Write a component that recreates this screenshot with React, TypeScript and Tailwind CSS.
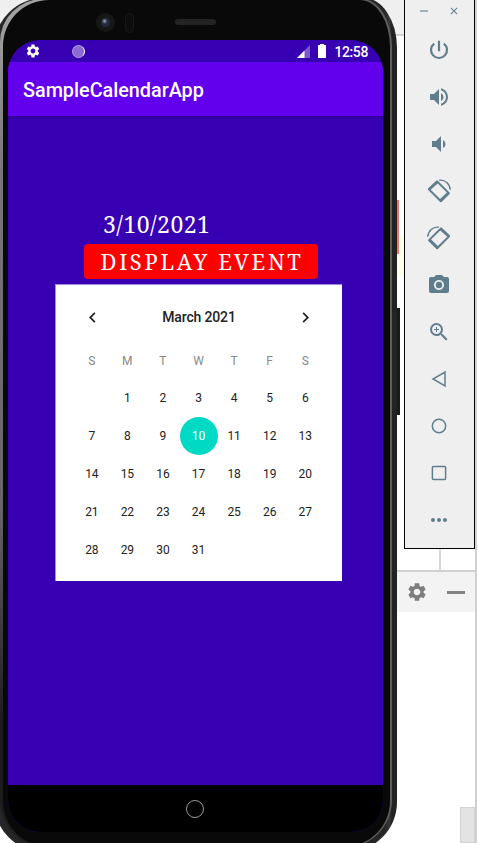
import React from "react";
import { MdSettings, MdVolumeUp, MdVolumeDown, MdCameraAlt, MdZoomIn, MdMoreHoriz, MdChevronLeft, MdChevronRight, MdClose } from "react-icons/md";

const weekdays = ["S", "M", "T", "W", "T", "F", "S"];
const cells: (number | null)[] = [null, ...Array.from({ length: 31 }, (_, i) => i + 1)];

function PowerIcon() {
  return (
    <svg viewBox="0 0 24 24" className="h-6 w-6" fill="none" stroke="currentColor" strokeWidth="2.2">
      <path d="M12 2.8v10.4M7.2 5.6a8 8 0 1 0 9.6 0" />
    </svg>
  );
}

function RotateIcon({ flipped = false }: { flipped?: boolean }) {
  return (
    <svg viewBox="0 0 24 24" className={flipped ? "h-6 w-6 -scale-x-100 overflow-visible" : "h-6 w-6 overflow-visible"} fill="none">
      <path
        d="M1.2 9.2 9.2 1.7Q10 1 10.8 1.8L22.6 13.5Q23.3 14.2 22.6 15L14.6 22.9Q13.8 23.6 13.1 22.9L1.2 11Q.4 10 1.2 9.2ZM3.7 10.7 13.1 20.1 19.9 13.5 10.7 4.4Z"
        fill="currentColor"
        fillRule="evenodd"
      />
      <path d="M12.3 1.2C18 .4 22.8 4.8 23.3 10.8" stroke="currentColor" strokeWidth="1.4" />
    </svg>
  );
}

function EmulatorToolbar() {
  return (
    <aside className="absolute -top-px left-[404px] flex h-[550px] w-[71px] flex-col border border-black bg-[#efefef] text-[#607d8b]">
      <div className="flex h-[22px] items-center justify-between pl-[15px] pr-[14px]">
        <span className="h-[2px] w-2 bg-[#a3b1b8]" />
        <MdClose className="h-3 w-3" />
      </div>
      <div className="flex flex-col items-center pt-1 pr-[2px]">
        {[
          <PowerIcon />,
          <MdVolumeUp className="h-6 w-6" />,
          <MdVolumeDown className="h-6 w-6" />,
          <RotateIcon />,
          <RotateIcon flipped />,
          <MdCameraAlt className="h-6 w-6" />,
          <MdZoomIn className="h-6 w-6" />,
          <svg viewBox="0 0 24 24" className="h-6 w-6" fill="none" stroke="currentColor" strokeWidth="1.5"><path d="M18 5v14L6 12Z" /></svg>,
          <svg viewBox="0 0 24 24" className="h-6 w-6" fill="none" stroke="currentColor" strokeWidth="1.5"><circle cx="12" cy="12" r="6.7" /></svg>,
          <svg viewBox="0 0 24 24" className="h-6 w-6" fill="none" stroke="currentColor" strokeWidth="1.5"><rect x="5.4" y="5.4" width="13.2" height="13.2" rx="1" /></svg>,
          <MdMoreHoriz className="h-6 w-6" />,
        ].map((icon, i) => (
          <div key={i} className="flex h-[47px] w-full items-center justify-center">{icon}</div>
        ))}
      </div>
    </aside>
  );
}

function Calendar() {
  return (
    <section className="ml-[47px] h-[297px] w-[287px] border-t border-l border-[#a68add] bg-white pt-[13px] pr-[19px] pl-[18px] text-[#222]">
      <div className="flex h-[38px] items-center justify-between pr-[7px] pl-[8px]">
        <MdChevronLeft className="h-[21px] w-[21px]" />
        <h2 className="pt-px text-[14px] font-medium tracking-[-0.15px]">March 2021</h2>
        <MdChevronRight className="h-[21px] w-[21px]" />
      </div>
      <div className="grid h-[42px] grid-cols-7 pt-[8px] text-center text-[12px] leading-[34px] text-[#888]">
        {weekdays.map((day, i) => <span key={i}>{day}</span>)}
      </div>
      <div className="grid auto-rows-[38.2px] grid-cols-7 items-center justify-items-center pt-[0.6px] text-[12px] tracking-[-0.1px]">
        {cells.map((day, i) =>
          day === 10 ? (
            <span key={i} className="flex h-[38px] w-[38px] items-center justify-center rounded-full bg-[#00dac5] text-white">10</span>
          ) : (
            <span key={i}>{day}</span>
          )
        )}
      </div>
    </section>
  );
}

function Phone() {
  return (
    <>
      <div className="absolute top-[200px] left-[395px] h-[54px] w-[4px] bg-[#ed7861]" />
      <div className="absolute top-[308px] left-[395px] h-[107px] w-[5px] bg-[#1b1b1b]" />
      <div className="absolute -top-[2px] -left-[6px] flex h-[854px] w-[403px] rounded-[50px] rounded-tr-[33px_50px] bg-[linear-gradient(90deg,#252627_0,#252627_391px,#3a3a3a_396px,#222_397px)] pt-px pr-[5px] pb-[4px] pl-[6px]">
        <div className="flex h-full w-full rounded-[48px] rounded-tl-[43px] rounded-tr-[30px_48px] bg-[linear-gradient(90deg,transparent_50%,#5e5e5a_50%,#5e5e5a),linear-gradient(#a5a5a5,#777_20%,#666_60%,#1c1c1c_85%)] pt-px pr-[2px] pb-px pl-[3px]">
          <div className="flex h-full w-full flex-col rounded-[46px] rounded-tl-[46px] rounded-tr-[30px_47px] bg-[#09090a] pt-[12px] pl-[5px]">
            <div className="flex h-[28px] items-start pl-[88px]">
              <div className="mt-[1px] flex h-[19px] w-[19px] items-center justify-center rounded-full bg-[#171717]">
                <span className="h-[9px] w-[9px] rounded-full bg-[radial-gradient(circle_at_40%_35%,#a0a9c0,#252b3c_35%,#242633)]" />
              </div>
              <div className="mt-[1px] ml-[10px] h-[20px] w-[9px] rounded-full border border-[#191919] bg-[#0d0d0d]" />
              <div className="mt-[7px] ml-[41px] h-[6px] w-[41px] rounded-full bg-[#242424]" />
            </div>
            <main className="flex h-[792px] w-[375px] shrink-0 flex-col overflow-hidden rounded-[32px] bg-[#3700b3]">
              <header className="flex h-[22px] shrink-0 items-center pl-[17px] pr-[15px] text-white">
                <MdSettings className="h-4 w-4" />
                <span className="ml-[31px] h-[13px] w-[13px] rounded-full border border-[#b39be1] border-r-white bg-[#8c6ad1]" />
                <svg viewBox="0 0 13 13" className="ml-auto h-[13px] w-[13px]"><path d="M0 13 13 0v13Z" fill="#7c58ca" /><path d="M0 13 7.5 5.5V13Z" fill="#fff" /></svg>
                <svg viewBox="0 0 8 14" className="ml-2 h-[14px] w-2" fill="#fff"><path d="M2 1V0h4v1h2v13H0V1Z" /></svg>
                <time className="ml-[8px] pt-px text-[14px] font-medium leading-none tracking-[-0.4px]">12:58</time>
              </header>
              <div className="flex h-[54px] shrink-0 items-center bg-[#6200ee] pt-[3px] pl-[15px] text-white">
                <h1 className="text-[19.8px] font-medium">SampleCalendarApp</h1>
              </div>
              <div className="h-[669px] shrink-0 bg-[linear-gradient(#2d0093,#3700b3_4px)] pt-[93px]">
                <p className="ml-[95px] h-[35px] font-['Noto_Serif','Liberation_Serif',serif] text-[23px] leading-[30px] tracking-[0.45px] text-white">3/10/2021</p>
                <button className="ml-[76px] flex h-[35px] w-[234px] items-center justify-center rounded-[4px] bg-[#ff0000] pl-[2px] font-['Noto_Serif','Liberation_Serif',serif] text-[22px] tracking-[2.65px] text-white">DISPLAY EVENT</button>
                <div className="h-[5px]" />
                <Calendar />
              </div>
              <nav className="flex grow items-center justify-center bg-black pr-px">
                <span className="h-[18px] w-[18px] rounded-full border border-[#999]" />
              </nav>
            </main>
          </div>
        </div>
      </div>
    </>
  );
}

export default function App() {
  return (
    <div className="relative h-[843px] w-[478px] overflow-hidden bg-white font-['Roboto',sans-serif]">
      <div className="flex h-[843px] w-[477px] flex-col border-r-2 border-[#d0d0d0]">
        <div className="h-[36px] border-b-2 border-[#d0d0d0] bg-[#efefef]" />
        <div className="h-[199px]" />
        <div className="h-10 bg-[#fffdec]" />
        <div className="ml-[439px] h-[295px] w-[2px] bg-[#d8d8d8]" />
        <div className="ml-[340px] flex h-[42px] items-center justify-end gap-[19px] border-t-2 border-[#d0d0d0] bg-[#f3f3f3] pr-[10px] text-[#7e7e7e]">
          <MdSettings className="h-[22px] w-[22px]" />
          <span className="h-[3px] w-[18px] bg-[#858585]" />
        </div>
        <div className="mt-auto ml-auto h-9 w-[15px] border border-[#d2d2d2] bg-[#e3e3e3]" />
      </div>
      <Phone />
      <EmulatorToolbar />
    </div>
  );
}
